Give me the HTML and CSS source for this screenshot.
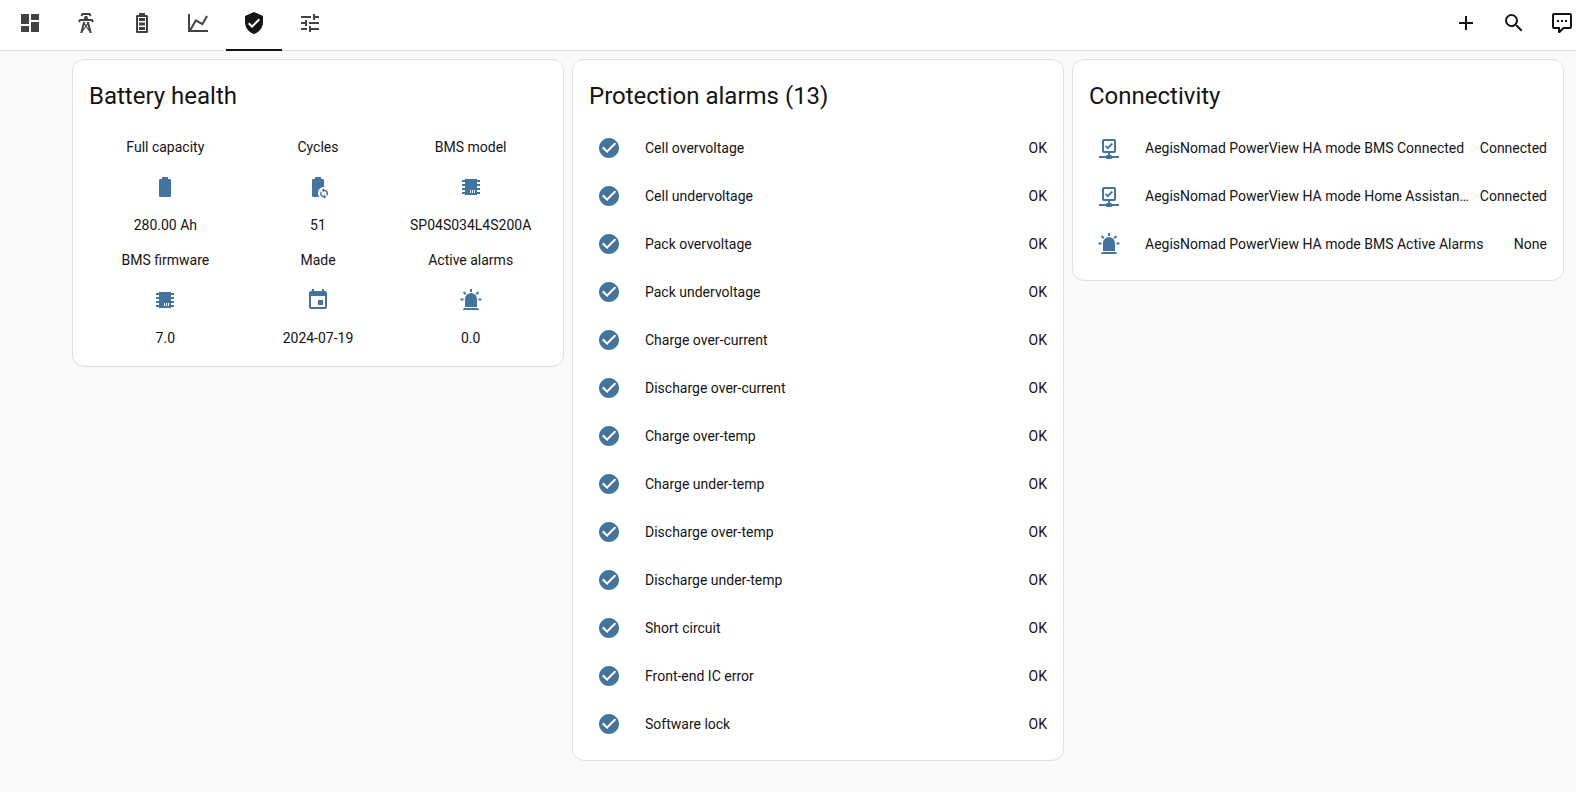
FILE: index.html
```html
<!DOCTYPE html>
<html lang="en">
<head>
    <meta charset="UTF-8">
    <meta name="viewport" content="width=device-width, initial-scale=1.0">
    <title>Battery health</title>
    <link rel="stylesheet" href="styles.css">
</head>
<body>
    <!-- icon set, 24x24 grid -->
    <svg class="sprite" aria-hidden="true">
        <symbol id="dashboard" viewBox="0 0 24 24"><path d="M13,3V9H21V3M13,21H21V11H13M3,21H11V15H3M3,13H11V3H3V13Z"/></symbol>
        <symbol id="tower" viewBox="0 0 24 24"><path d="M8.28,5.45L6.5,4.55L7.76,2H16.23L17.5,4.55L15.72,5.44L15,4H9L8.28,5.45M18.62,8H14.09L13.3,5H10.7L9.91,8H5.38L4.1,10.55L5.89,11.44L6.62,10H17.38L18.1,11.45L19.89,10.56L18.62,8M17.77,22H15.7L15.46,21.1L12,15.9L8.53,21.1L8.3,22H6.23L9.12,11H11.19L10.83,12.35L12,14.1L13.16,12.35L12.81,11H14.88L17.77,22M11.4,15L10.5,13.65L9.32,18.13L11.4,15M14.68,18.12L13.5,13.64L12.6,15L14.68,18.12Z"/></symbol>
        <symbol id="battery-high" viewBox="0 0 24 24"><path d="M16 20H8V6H16M16.67 4H15V2H9V4H7.33C6.6 4 6 4.6 6 5.33V20.67C6 21.4 6.6 22 7.33 22H16.67C17.41 22 18 21.41 18 20.67V5.33C18 4.6 17.4 4 16.67 4M15 16H9V19H15V16M15 7H9V10H15V7M15 11.5H9V14.5H15V11.5Z"/></symbol>
        <symbol id="chart" viewBox="0 0 24 24"><path d="M16,11.78L20.24,4.45L21.97,5.45L16.74,14.5L10.23,10.75L5.46,19H22V21H2V3H4V17.54L9.5,8L16,11.78Z"/></symbol>
        <symbol id="shield" viewBox="0 0 24 24"><path d="M10,17L6,13L7.41,11.59L10,14.17L16.59,7.58L18,9M12,1L3,5V11C3,16.55 6.84,21.74 12,23C17.16,21.74 21,16.55 21,11V5L12,1Z"/></symbol>
        <symbol id="tune" viewBox="0 0 24 24"><path d="M3,17V19H9V17H3M3,5V7H13V5H3M13,21V19H21V17H13V15H11V21H13M7,9V11H3V13H7V15H9V9H7M21,13V11H11V13H21M15,9H17V7H21V5H17V3H15V9Z"/></symbol>
        <symbol id="plus" viewBox="0 0 24 24"><path d="M19,13H13V19H11V13H5V11H11V5H13V11H19V13Z"/></symbol>
        <symbol id="magnify" viewBox="0 0 24 24"><path d="M9.5,3A6.5,6.5 0 0,1 16,9.5C16,11.11 15.41,12.59 14.44,13.73L14.71,14H15.5L20.5,19L19,20.5L14,15.5V14.71L13.73,14.44C12.59,15.41 11.11,16 9.5,16A6.5,6.5 0 0,1 3,9.5A6.5,6.5 0 0,1 9.5,3M9.5,5C7,5 5,7 5,9.5C5,12 7,14 9.5,14C12,14 14,12 14,9.5C14,7 12,5 9.5,5Z"/></symbol>
        <symbol id="comment" viewBox="0 0 24 24"><path d="M9,22A1,1 0 0,1 8,21V18H4A2,2 0 0,1 2,16V4C2,2.89 2.9,2 4,2H20A2,2 0 0,1 22,4V16A2,2 0 0,1 20,18H13.9L10.2,21.71C10,21.9 9.75,22 9.5,22V22H9M10,16V19.08L13.08,16H20V4H4V16H10M17,11H15V9H17V11M13,11H11V9H13V11M9,11H7V9H9V11Z"/></symbol>
        <symbol id="battery" viewBox="0 0 24 24"><path d="M16.67,4H15V2H9V4H7.33A1.33,1.33 0 0,0 6,5.33V20.67C6,21.4 6.6,22 7.33,22H16.67A1.33,1.33 0 0,0 18,20.67V5.33C18,4.6 17.4,4 16.67,4Z"/></symbol>
        <symbol id="battery-sync" viewBox="0 0 24 24"><path d="M12,18C12,14.69 14.69,12 18,12V5.33C18,4.6 17.4,4 16.67,4H15V2H9V4H7.33C6.6,4 6,4.6 6,5.33V20.67C6,21.4 6.6,22 7.33,22H13.53C12.58,20.94 12,19.54 12,18M18,14.5V13L15.75,15.25L18,17.5V16A2.5,2.5 0 0,1 20.24,19.62L21.33,20.71A4,4 0 0,0 18,14.5M18,21A2.5,2.5 0 0,1 15.76,17.38L14.67,16.29A4,4 0 0,0 18,22.5V24L20.25,21.75L18,19.5V21Z"/></symbol>
        <symbol id="chip" viewBox="0 0 24 24"><path d="M21,7V5H18V4H6V5H3V7H6V9H3V11H6V13H3V15H6V17H3V19H6V20H18V19H21V17H18V15H21V13H18V11H21V9H18V7H21M12,18H11V15H12V18M14,18H13V15H14V18M16,18H15V15H16V18Z"/></symbol>
        <symbol id="calendar" viewBox="0 0 24 24"><path d="M19,19H5V8H19M16,1V3H8V1H6V3H5C3.89,3 3,3.89 3,5V19A2,2 0 0,0 5,21H19A2,2 0 0,0 21,19V5C21,3.89 20.1,3 19,3H18V1M17,12H12V17H17V12Z"/></symbol>
        <symbol id="alarm" viewBox="0 0 24 24"><path d="M6,6.9L3.87,4.78L5.28,3.37L7.4,5.5L6,6.9M13,1V4H11V1H13M20.13,4.78L18,6.9L16.6,5.5L18.72,3.37L20.13,4.78M4.5,10.5V12.5H1.5V10.5H4.5M19.5,10.5H22.5V12.5H19.5V10.5M6,20H18A2,2 0 0,1 20,22H4A2,2 0 0,1 6,20M12,5A6,6 0 0,1 18,11V19H6V11A6,6 0 0,1 12,5Z"/></symbol>
        <symbol id="network" viewBox="0 0 24 24"><path d="M15,20A1,1 0 0,0 14,19H13V17H17A2,2 0 0,0 19,15V5A2,2 0 0,0 17,3H7A2,2 0 0,0 5,5V15A2,2 0 0,0 7,17H11V19H10A1,1 0 0,0 9,20H2V22H9A1,1 0 0,0 10,23H14A1,1 0 0,0 15,22H22V20H15M7,15V5H17V15H7M10.8,13.4L8,10.4L9.2,9.2L10.8,10.8L14.8,6.8L16,8.2L10.8,13.4Z"/></symbol>
        <symbol id="check" viewBox="0 0 24 24"><path d="M12,2C6.5,2 2,6.5 2,12S6.5,22 12,22 22,17.5 22,12 17.5,2 12,2M10,17L5,12L6.41,10.59L10,14.17L17.59,6.58L19,8L10,17Z"/></symbol>
    </svg>

    <header class="toolbar">
        <nav class="tabs">
            <a class="tab" href="#" aria-label="Overview"><svg class="icon"><use href="#dashboard"/></svg></a>
            <a class="tab" href="#" aria-label="Energy"><svg class="icon"><use href="#tower"/></svg></a>
            <a class="tab" href="#" aria-label="Battery"><svg class="icon"><use href="#battery-high"/></svg></a>
            <a class="tab" href="#" aria-label="History"><svg class="icon"><use href="#chart"/></svg></a>
            <a class="tab active" href="#" aria-label="Health" aria-current="page"><svg class="icon"><use href="#shield"/></svg></a>
            <a class="tab" href="#" aria-label="Settings"><svg class="icon"><use href="#tune"/></svg></a>
        </nav>
        <div class="actions">
            <button class="action" aria-label="Add"><svg class="icon"><use href="#plus"/></svg></button>
            <button class="action" aria-label="Search"><svg class="icon"><use href="#magnify"/></svg></button>
            <button class="action" aria-label="Assist"><svg class="icon"><use href="#comment"/></svg></button>
        </div>
    </header>

    <main class="view">
        <section class="card">
            <h2 class="card-title">Battery health</h2>
            <div class="glance">
                <div class="entity"><span>Full capacity</span><svg class="icon"><use href="#battery"/></svg><span>280.00 Ah</span></div>
                <div class="entity"><span>Cycles</span><svg class="icon"><use href="#battery-sync"/></svg><span>51</span></div>
                <div class="entity"><span>BMS model</span><svg class="icon"><use href="#chip"/></svg><span>SP04S034L4S200A</span></div>
                <div class="entity"><span>BMS firmware</span><svg class="icon"><use href="#chip"/></svg><span>7.0</span></div>
                <div class="entity"><span>Made</span><svg class="icon"><use href="#calendar"/></svg><span>2024-07-19</span></div>
                <div class="entity"><span>Active alarms</span><svg class="icon"><use href="#alarm"/></svg><span>0.0</span></div>
            </div>
        </section>

        <section class="card">
            <h2 class="card-title">Protection alarms (13)</h2>
            <ul class="rows">
                <li class="row"><svg class="icon"><use href="#check"/></svg><span class="name">Cell overvoltage</span><span>OK</span></li>
                <li class="row"><svg class="icon"><use href="#check"/></svg><span class="name">Cell undervoltage</span><span>OK</span></li>
                <li class="row"><svg class="icon"><use href="#check"/></svg><span class="name">Pack overvoltage</span><span>OK</span></li>
                <li class="row"><svg class="icon"><use href="#check"/></svg><span class="name">Pack undervoltage</span><span>OK</span></li>
                <li class="row"><svg class="icon"><use href="#check"/></svg><span class="name">Charge over-current</span><span>OK</span></li>
                <li class="row"><svg class="icon"><use href="#check"/></svg><span class="name">Discharge over-current</span><span>OK</span></li>
                <li class="row"><svg class="icon"><use href="#check"/></svg><span class="name">Charge over-temp</span><span>OK</span></li>
                <li class="row"><svg class="icon"><use href="#check"/></svg><span class="name">Charge under-temp</span><span>OK</span></li>
                <li class="row"><svg class="icon"><use href="#check"/></svg><span class="name">Discharge over-temp</span><span>OK</span></li>
                <li class="row"><svg class="icon"><use href="#check"/></svg><span class="name">Discharge under-temp</span><span>OK</span></li>
                <li class="row"><svg class="icon"><use href="#check"/></svg><span class="name">Short circuit</span><span>OK</span></li>
                <li class="row"><svg class="icon"><use href="#check"/></svg><span class="name">Front-end IC error</span><span>OK</span></li>
                <li class="row"><svg class="icon"><use href="#check"/></svg><span class="name">Software lock</span><span>OK</span></li>
            </ul>
        </section>

        <section class="card">
            <h2 class="card-title">Connectivity</h2>
            <ul class="rows">
                <li class="row"><svg class="icon"><use href="#network"/></svg><span class="name">AegisNomad PowerView HA mode BMS Connected</span><span>Connected</span></li>
                <li class="row"><svg class="icon"><use href="#network"/></svg><span class="name">AegisNomad PowerView HA mode Home Assistant Connected</span><span>Connected</span></li>
                <li class="row"><svg class="icon"><use href="#alarm"/></svg><span class="name">AegisNomad PowerView HA mode BMS Active Alarms</span><span>None</span></li>
            </ul>
        </section>
    </main>
</body>
</html>
```
FILE: styles.css
```css
* {
    box-sizing: border-box;
}

body {
    margin: 0;
    font-family: Roboto, "Noto Sans", sans-serif;
    font-size: 14px;
    line-height: 22px;
    color: #141414;
    background-color: #fafafa;
}

.sprite {
    display: none;
}

.icon {
    display: block;
    flex: none;
    width: 24px;
    height: 24px;
    fill: currentColor;
}

.toolbar {
    display: flex;
    justify-content: space-between;
    height: 51px;
    padding-left: 2px;
    background: white;
    border-bottom: 1px solid #e0e0e0;
    overflow-x: clip;
}

.tabs {
    display: flex;
}

.tab {
    display: flex;
    justify-content: center;
    width: 56px;
    height: 51px;
    padding-top: 11px;
    color: #424242;
}

.tab.active {
    color: #141414;
    border-bottom: 2px solid #141414;
}

/* the last action runs past the window edge */
.actions {
    display: flex;
    margin-right: -10px;
}

.action {
    width: 48px;
    height: 46px;
    padding: 0 12px;
    border: none;
    background: none;
    color: #141414;
    cursor: pointer;
}

.view {
    display: grid;
    grid-template-columns: repeat(3, minmax(0, 1fr));
    align-items: start;
    gap: 8px;
    padding: 8px 12px 8px 72px;
}

.card {
    padding: 0 16px 16px;
    background: white;
    border: 1px solid #e0e0e0;
    border-radius: 12px;
}

.card-title {
    margin: 0;
    padding: 12px 0 8px;
    font-size: 24px;
    font-weight: 400;
    line-height: 48px;
}

.glance {
    display: grid;
    grid-template-columns: repeat(3, 1fr);
    row-gap: 13px;
    padding: 8px 0 1px;
}

.entity {
    display: flex;
    flex-direction: column;
    align-items: center;
}

.entity .icon {
    margin: 17px 0 15px;
    color: #44739e;
}

.rows {
    display: flex;
    flex-direction: column;
    gap: 8px;
    margin: 0;
    padding: 0;
    list-style: none;
}

.row {
    display: flex;
    align-items: center;
    height: 40px;
}

.row .icon {
    margin: 0 8px;
    color: #44739e;
}

.name {
    flex: 1;
    min-width: 0;
    margin: 0 8px 0 16px;
    overflow: hidden;
    white-space: nowrap;
    text-overflow: ellipsis;
}
```
